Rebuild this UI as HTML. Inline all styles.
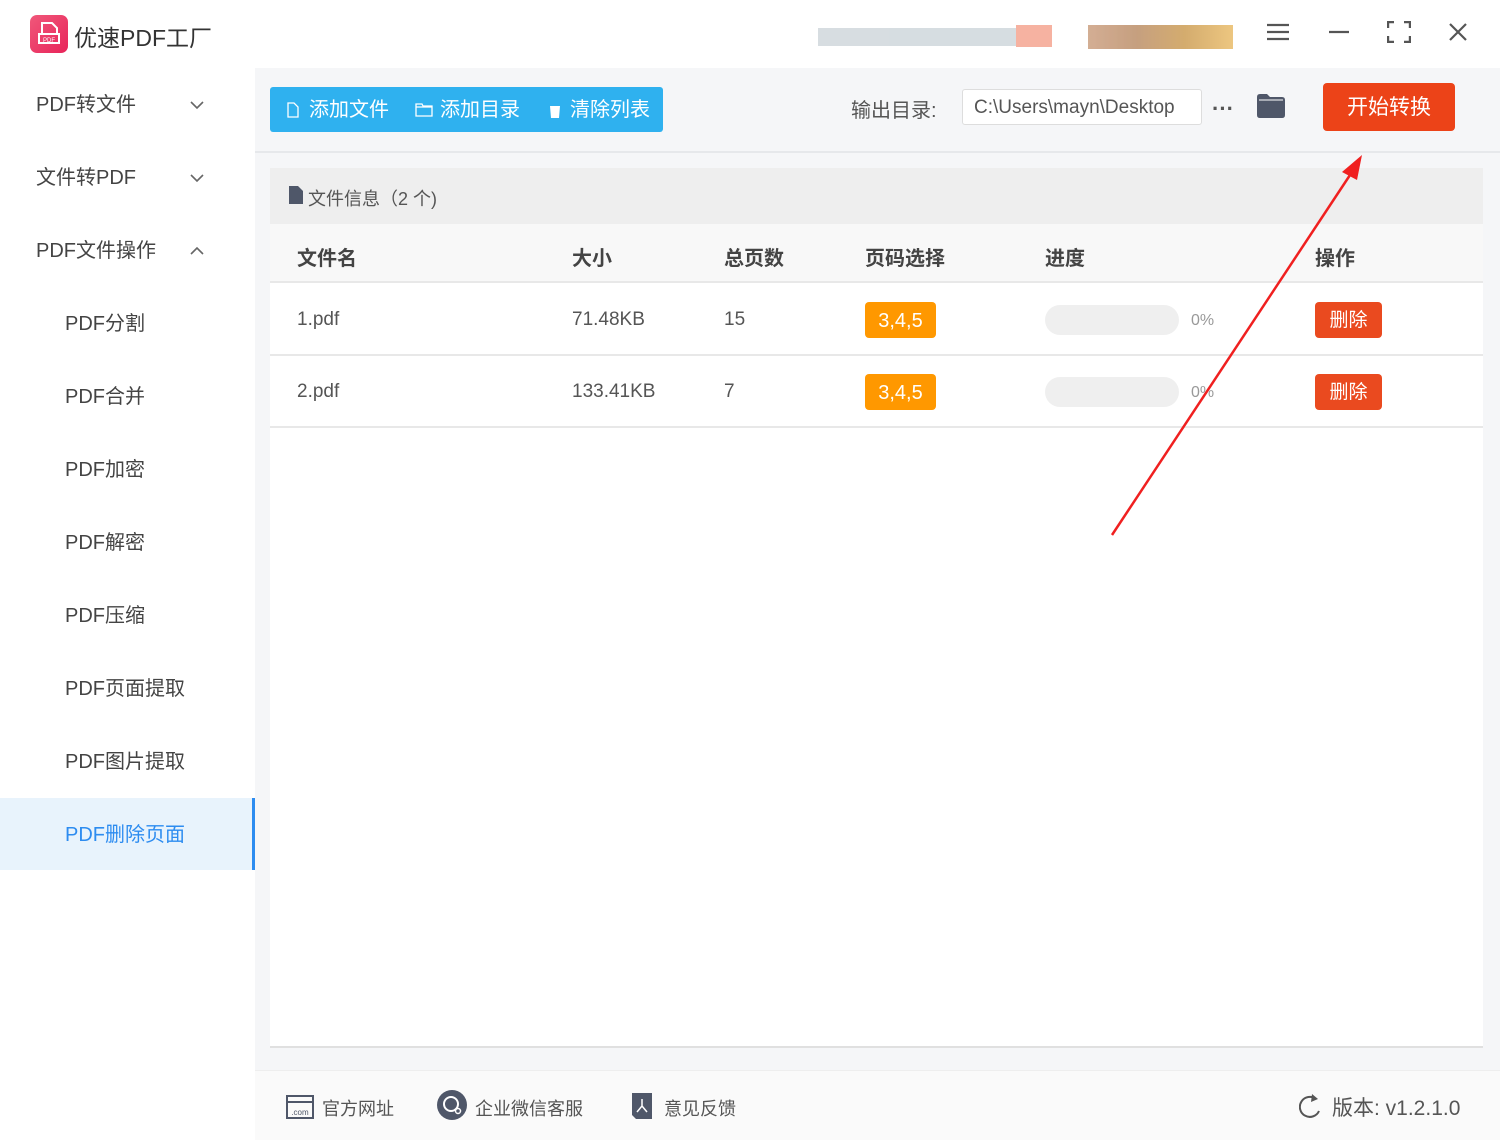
<!DOCTYPE html>
<html><head><meta charset="utf-8"><style>
*{margin:0;padding:0;box-sizing:border-box}
body{width:1500px;height:1140px;position:relative;background:#fff;font-family:"Liberation Sans","Noto Sans CJK SC",sans-serif;color:#333;overflow:hidden}
.a{position:absolute}
.side{left:0;top:68px;width:255px;height:1072px;background:#fff}
.si{position:absolute;left:0;width:255px;height:72px;line-height:74px;font-size:20px;color:#444}
.main{left:255px;top:68px;width:1245px;height:1072px;background:#f5f6f8}
.th{position:absolute;top:242px;font-size:20px;font-weight:bold;color:#444}
.td{position:absolute;font-size:19px;color:#555}
.tag{position:absolute;width:71px;height:36px;background:#ff9800;color:#fff;border-radius:4px;font-size:20px;text-align:center;line-height:38px}
.del{position:absolute;width:67px;height:36px;background:#ea4a1f;color:#fff;border-radius:4px;font-size:19px;text-align:center;line-height:38px}
.bar{position:absolute;width:134px;height:30px;background:#efefef;border-radius:15px}
.pc{position:absolute;font-size:16px;color:#999}
.ft{position:absolute;top:1095px;font-size:18px;color:#555}
</style></head><body>
<div class="a" style="left:30px;top:15px;width:38px;height:38px;border-radius:7px;background:linear-gradient(135deg,#f0587a,#e8245a)"></div>
<svg class="a" style="left:30px;top:15px" width="38" height="38"><path d="M12 8h10l5 5v6H12z" fill="none" stroke="#fff" stroke-width="2"/><rect x="9" y="19" width="20" height="9" fill="none" stroke="#fff" stroke-width="2"/><text x="19" y="27" font-size="6" fill="#fff" text-anchor="middle" font-family="Liberation Sans">PDF</text></svg>
<div class="a" style="left:74px;top:19px;font-size:23px;color:#333">优速PDF工厂</div>
<div class="a" style="left:818px;top:0;width:430px;height:60px;opacity:.8">
<div class="a" style="left:0;top:28px;width:200px;height:18px;background:#cdd5da"></div>
<div class="a" style="left:198px;top:25px;width:36px;height:22px;background:#f4a08a"></div>
<div class="a" style="left:270px;top:25px;width:145px;height:24px;background:linear-gradient(90deg,#c99a7a,#b88860,#c9974a,#e8b860)"></div>
</div>
<svg class="a" style="left:1266px;top:22px" width="24" height="20"><path d="M1 3h22M1 10h22M1 17h22" stroke="#555" stroke-width="2.2"/></svg>
<svg class="a" style="left:1328px;top:22px" width="22" height="20"><path d="M1 10h20" stroke="#555" stroke-width="2.2"/></svg>
<svg class="a" style="left:1387px;top:21px" width="24" height="22"><path d="M1 7V1h6M17 1h6v6M23 15v6h-6M7 21H1v-6" fill="none" stroke="#555" stroke-width="2.4"/></svg>
<svg class="a" style="left:1448px;top:22px" width="20" height="20"><path d="M2 2l16 16M18 2L2 18" stroke="#555" stroke-width="2.2"/></svg>
<div class="a side">
<div class="si" style="top:0;padding-left:36px">PDF转文件<svg class="a" style="left:190px;top:32px" width="14" height="10"><path d="M1 2l6 6 6-6" fill="none" stroke="#666" stroke-width="1.6"/></svg></div>
<div class="si" style="top:73px;padding-left:36px">文件转PDF<svg class="a" style="left:190px;top:32px" width="14" height="10"><path d="M1 2l6 6 6-6" fill="none" stroke="#666" stroke-width="1.6"/></svg></div>
<div class="si" style="top:146px;padding-left:36px">PDF文件操作<svg class="a" style="left:190px;top:32px" width="14" height="10"><path d="M1 8l6-6 6 6" fill="none" stroke="#666" stroke-width="1.6"/></svg></div>
<div class="si" style="top:219px;padding-left:65px">PDF分割</div>
<div class="si" style="top:292px;padding-left:65px">PDF合并</div>
<div class="si" style="top:365px;padding-left:65px">PDF加密</div>
<div class="si" style="top:438px;padding-left:65px">PDF解密</div>
<div class="si" style="top:511px;padding-left:65px">PDF压缩</div>
<div class="si" style="top:584px;padding-left:65px">PDF页面提取</div>
<div class="si" style="top:657px;padding-left:65px">PDF图片提取</div>
<div class="si" style="top:730px;padding-left:65px;background:#e8f3fc;color:#2d8cf0;border-right:3px solid #2d8cf0">PDF删除页面</div>
</div>
<div class="a main"></div>
<div class="a" style="left:270px;top:87px;width:393px;height:45px;background:#2fb1ef;border-radius:3px;color:#fff;font-size:20px;line-height:47px">
<svg class="a" style="left:17px;top:15px" width="12" height="16"><path d="M1 1h6l4 4v10H1z" fill="none" stroke="#fff" stroke-width="1.3"/></svg>
<span class="a" style="left:39px">添加文件</span>
<svg class="a" style="left:145px;top:16px" width="18" height="14"><path d="M1 1h6l1 2h9v10H1z M1 4h16" fill="none" stroke="#fff" stroke-width="1.3"/></svg>
<span class="a" style="left:170px">添加目录</span>
<svg class="a" style="left:279px;top:16px" width="12" height="15"><path d="M0 2h12M4 0h4M1 3h10l-1 12H2z" fill="#fff"/></svg>
<span class="a" style="left:300px">清除列表</span>
</div>
<div class="a" style="left:851px;top:94px;font-size:20px;color:#555">输出目录:</div>
<div class="a" style="left:962px;top:89px;width:240px;height:36px;background:#fff;border:1px solid #ddd;border-radius:3px;font-size:19px;color:#555;line-height:36px;padding-left:11px;overflow:hidden;white-space:nowrap">C:\Users\mayn\Desktop</div>
<div class="a" style="left:1212px;top:96px;font-size:22px;color:#555;font-weight:bold;letter-spacing:0">···</div>
<svg class="a" style="left:1257px;top:94px" width="28" height="24"><path d="M0 3q0-3 3-3h7l3 3h12q3 0 3 3v15q0 3-3 3H3q-3 0-3-3z" fill="#4f5769"/><path d="M2 6h24" stroke="#fff" stroke-width="1"/></svg>
<div class="a" style="left:1323px;top:83px;width:132px;height:48px;background:#ec4318;border-radius:4px;color:#fff;font-size:21px;text-align:center;line-height:50px">开始转换</div>
<div class="a" style="left:255px;top:151px;width:1245px;height:2px;background:#e6e8eb"></div>
<div class="a" style="left:270px;top:168px;width:1213px;height:880px;background:#fff;border-bottom:2px solid #e0e0e0"></div>
<div class="a" style="left:270px;top:168px;width:1213px;height:56px;background:#eeeeee"></div>
<svg class="a" style="left:289px;top:186px" width="14" height="18"><path d="M0 0h9l5 5v13H0z" fill="#4f5769"/></svg>
<div class="a" style="left:308px;top:185px;font-size:18px;color:#555">文件信息（2 个)</div>
<div class="a" style="left:270px;top:224px;width:1213px;height:59px;background:#f8f8f8;border-bottom:2px solid #e8e8e8"></div>
<div class="th" style="left:297px">文件名</div>
<div class="th" style="left:572px">大小</div>
<div class="th" style="left:724px">总页数</div>
<div class="th" style="left:865px">页码选择</div>
<div class="th" style="left:1045px">进度</div>
<div class="th" style="left:1315px">操作</div>
<div class="a" style="left:270px;top:354px;width:1213px;height:2px;background:#e8e8e8"></div>
<div class="a" style="left:270px;top:426px;width:1213px;height:2px;background:#e8e8e8"></div>
<div class="td" style="left:297px;top:309px">1.pdf</div>
<div class="td" style="left:572px;top:309px">71.48KB</div>
<div class="td" style="left:724px;top:309px">15</div>
<div class="tag" style="left:865px;top:302px">3,4,5</div>
<div class="bar" style="left:1045px;top:305px"></div>
<div class="pc" style="left:1191px;top:312px">0%</div>
<div class="del" style="left:1315px;top:302px">删除</div>
<div class="td" style="left:297px;top:381px">2.pdf</div>
<div class="td" style="left:572px;top:381px">133.41KB</div>
<div class="td" style="left:724px;top:381px">7</div>
<div class="tag" style="left:865px;top:374px">3,4,5</div>
<div class="bar" style="left:1045px;top:377px"></div>
<div class="pc" style="left:1191px;top:384px">0%</div>
<div class="del" style="left:1315px;top:374px">删除</div>
<svg class="a" style="left:0;top:0" width="1500" height="1140"><path d="M1112 535L1352 172" stroke="#f02020" stroke-width="2.5"/><path d="M1362 155L1342 172L1357 180z" fill="#f02020"/></svg>
<div class="a" style="left:255px;top:1070px;width:1245px;height:70px;background:#fafafa;border-top:1px solid #eee"></div>
<svg class="a" style="left:286px;top:1095px" width="28" height="24"><rect x="1" y="1" width="26" height="22" fill="none" stroke="#4f5769" stroke-width="2"/><path d="M1 7h26" stroke="#4f5769" stroke-width="2"/><text x="14" y="20" font-size="8" text-anchor="middle" fill="#4f5769" font-family="Liberation Sans">.com</text></svg>
<div class="ft" style="left:322px">官方网址</div>
<svg class="a" style="left:437px;top:1090px" width="30" height="30"><circle cx="15" cy="15" r="15" fill="#4f5769"/><circle cx="14" cy="14" r="7" fill="none" stroke="#fff" stroke-width="2"/><circle cx="21" cy="21" r="2.5" fill="none" stroke="#fff" stroke-width="1.5"/></svg>
<div class="ft" style="left:475px">企业微信客服</div>
<svg class="a" style="left:632px;top:1093px" width="20" height="28"><path d="M0 0h20v26H4l-4-4z" fill="#4f5769"/><path d="M10 6v7l-5 6M10 13l5 6" stroke="#fff" stroke-width="1.5" fill="none"/></svg>
<div class="ft" style="left:664px">意见反馈</div>
<svg class="a" style="left:1299px;top:1093px" width="24" height="28"><path d="M17 6A10 10 0 1 0 20 18" fill="none" stroke="#555" stroke-width="2"/><path d="M13 1l6 5-7 3z" fill="#555"/></svg>
<div class="ft" style="left:1332px;top:1092px;font-size:21px">版本:  v1.2.1.0</div>
</body></html>
